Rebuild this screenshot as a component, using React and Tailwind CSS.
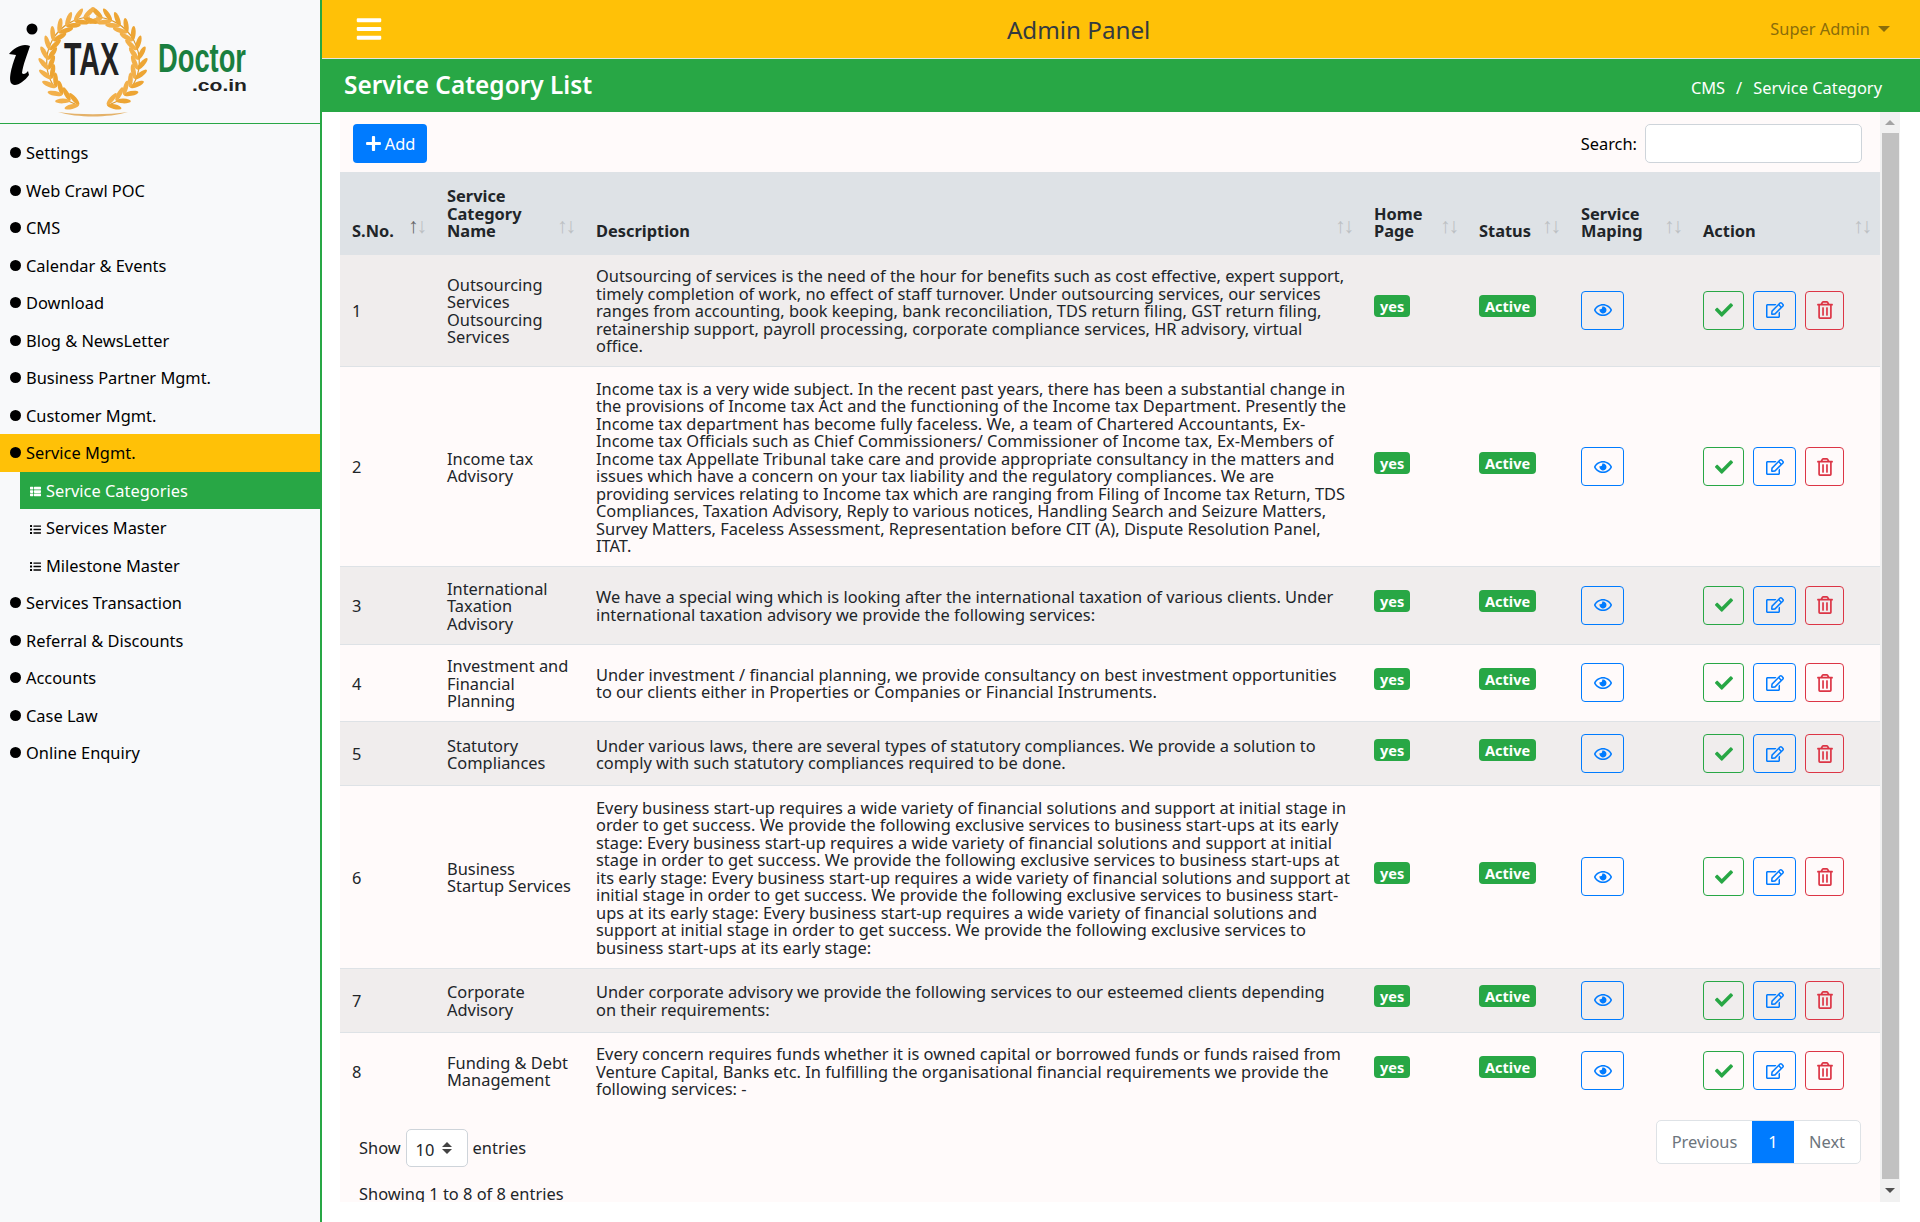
import { FaBars, FaCheck, FaList, FaPlus, FaRegEdit, FaRegEye, FaRegTrashAlt, FaThList } from "react-icons/fa";

const menu = [
  { label: "Settings" },
  { label: "Web Crawl POC" },
  { label: "CMS" },
  { label: "Calendar & Events" },
  { label: "Download" },
  { label: "Blog & NewsLetter" },
  { label: "Business Partner Mgmt." },
  { label: "Customer Mgmt." },
  { label: "Service Mgmt.", active: true },
  { label: "Service Categories", sub: true, current: true },
  { label: "Services Master", sub: true },
  { label: "Milestone Master", sub: true },
  { label: "Services Transaction" },
  { label: "Referral & Discounts" },
  { label: "Accounts" },
  { label: "Case Law" },
  { label: "Online Enquiry" },
];

const heads = [
  { lines: ["S.No."], width: "w-[95px]", sorted: true },
  { lines: ["Service", "Category", "Name"], width: "w-[149px]" },
  { lines: ["Description"], width: "w-[778px]" },
  { lines: ["Home", "Page"], width: "w-[105px]" },
  { lines: ["Status"], width: "w-[102px]" },
  { lines: ["Service", "Maping"], width: "w-[122px]" },
  { lines: ["Action"], width: "w-[189px]" },
];

const rows = [
  {
    id: 1,
    name: ["Outsourcing", "Services", "Outsourcing", "Services"],
    desc: [
      "Outsourcing of services is the need of the hour for benefits such as cost effective, expert support,",
      "timely completion of work, no effect of staff turnover. Under outsourcing services, our services",
      "ranges from accounting, book keeping, bank reconciliation, TDS return filing, GST return filing,",
      "retainership support, payroll processing, corporate compliance services, HR advisory, virtual",
      "office.",
    ],
  },
  {
    id: 2,
    name: ["Income tax", "Advisory"],
    desc: [
      "Income tax is a very wide subject. In the recent past years, there has been a substantial change in",
      "the provisions of Income tax Act and the functioning of the Income tax Department. Presently the",
      "Income tax department has become fully faceless. We, a team of Chartered Accountants, Ex-",
      "Income tax Officials such as Chief Commissioners/ Commissioner of Income tax, Ex-Members of",
      "Income tax Appellate Tribunal take care and provide appropriate consultancy in the matters and",
      "issues which have a concern on your tax liability and the regulatory compliances. We are",
      "providing services relating to Income tax which are ranging from Filing of Income tax Return, TDS",
      "Compliances, Taxation Advisory, Reply to various notices, Handling Search and Seizure Matters,",
      "Survey Matters, Faceless Assessment, Representation before CIT (A), Dispute Resolution Panel,",
      "ITAT.",
    ],
  },
  {
    id: 3,
    name: ["International", "Taxation", "Advisory"],
    desc: [
      "We have a special wing which is looking after the international taxation of various clients. Under",
      "international taxation advisory we provide the following services:",
    ],
  },
  {
    id: 4,
    name: ["Investment and", "Financial", "Planning"],
    desc: [
      "Under investment / financial planning, we provide consultancy on best investment opportunities",
      "to our clients either in Properties or Companies or Financial Instruments.",
    ],
  },
  {
    id: 5,
    name: ["Statutory", "Compliances"],
    desc: [
      "Under various laws, there are several types of statutory compliances. We provide a solution to",
      "comply with such statutory compliances required to be done.",
    ],
  },
  {
    id: 6,
    name: ["Business", "Startup Services"],
    desc: [
      "Every business start-up requires a wide variety of financial solutions and support at initial stage in",
      "order to get success. We provide the following exclusive services to business start-ups at its early",
      "stage: Every business start-up requires a wide variety of financial solutions and support at initial",
      "stage in order to get success. We provide the following exclusive services to business start-ups at",
      "its early stage: Every business start-up requires a wide variety of financial solutions and support at",
      "initial stage in order to get success. We provide the following exclusive services to business start-",
      "ups at its early stage: Every business start-up requires a wide variety of financial solutions and",
      "support at initial stage in order to get success. We provide the following exclusive services to",
      "business start-ups at its early stage:",
    ],
  },
  {
    id: 7,
    name: ["Corporate", "Advisory"],
    desc: [
      "Under corporate advisory we provide the following services to our esteemed clients depending",
      "on their requirements:",
    ],
  },
  {
    id: 8,
    name: ["Funding & Debt", "Management"],
    desc: [
      "Every concern requires funds whether it is owned capital or borrowed funds or funds raised from",
      "Venture Capital, Banks etc. In fulfilling the organisational financial requirements we provide the",
      "following services: -",
    ],
  },
];

// leaf positions for one wreath branch, side is 1 (right) or -1 (left)
function leaves(side) {
  const items = [];
  for (let i = 0; i < 13; i++) {
    const t = ((18 + i * 12.5) * Math.PI) / 180;
    const x = 93 + side * 45 * Math.sin(t);
    const y = 62 + 45 * Math.cos(t);
    const deg = (Math.atan2(-Math.sin(t), side * Math.cos(t)) * 180) / Math.PI;
    items.push({ x, y, deg, key: i });
  }
  return items;
}

function Logo() {
  return (
    <svg width="320" height="123" viewBox="0 0 320 123" className="block">
      <circle cx="32" cy="29" r="5.5" fill="#000" />
      <path d="M9 54 C15 47 23 43 30 46 C27 55 23 65 22 73 C23 75 26 74 28 71 L29 75 C24 82 16 87 12 84 C8 81 11 68 16 55 Z" fill="#000" />
      <path d="M53 85 A45 45 0 0 1 90 17 M133 85 A45 45 0 0 0 96 17 M66 100 L75 104 M120 100 L111 104" fill="none" stroke="#dd9a2e" strokeWidth="1.2" />
      {[1, -1].map((side) =>
        leaves(side).map((l) => (
          <g key={`${side}-${l.key}`} transform={`translate(${l.x} ${l.y})`}>
            <ellipse cx="7.5" cy="0" rx="7.5" ry="2.4" fill="#eda534" transform={`rotate(${l.deg + 32})`} />
            <ellipse cx="7.5" cy="0" rx="7.5" ry="2.4" fill="#f2b04a" transform={`rotate(${l.deg - 32})`} />
          </g>
        )),
      )}
      <path d="M58 112 C78 118 108 118 128 112 C108 115 78 115 58 112 Z" fill="#e4b26a" />
      <text x="64" y="75" textLength="55" lengthAdjust="spacingAndGlyphs" fontSize="47" fontWeight="700" fontFamily="Liberation Sans, sans-serif" fill="#222">TAX</text>
      <text x="158" y="72" textLength="88" lengthAdjust="spacingAndGlyphs" fontSize="41" fontWeight="700" fontFamily="Liberation Sans, sans-serif" fill="#1a7f3f">Doctor</text>
      <text x="192" y="91" textLength="55" lengthAdjust="spacingAndGlyphs" fontSize="17" fontWeight="700" fontFamily="Liberation Sans, sans-serif" fill="#222">.co.in</text>
    </svg>
  );
}

function Sidebar() {
  return (
    <aside className="w-[322px] shrink-0 border-r-2 border-[#28a745] bg-[#f8f9fa]">
      <div className="h-[124px] border-b border-[#28a745]">
        <Logo />
      </div>
      <ul className="pt-[10px]">
        {menu.map((m) =>
          m.sub ? (
            <li key={m.label} className={`ml-[20px] flex h-[37.5px] items-center gap-[5px] pl-[10px] ${m.current ? "bg-[#28a745] text-white" : "text-black"}`}>
              {m.current ? <FaThList size={11} className="mt-[3px]" /> : <FaList size={11} className="mt-[3px]" />}
              <span>{m.label}</span>
            </li>
          ) : (
            <li key={m.label} className={`flex h-[37.5px] items-center gap-[5px] pl-[10px] text-black ${m.active ? "bg-[#ffc107]" : ""}`}>
              <span className="h-[11px] w-[11px] rounded-full bg-black" />
              <span>{m.label}</span>
            </li>
          ),
        )}
      </ul>
    </aside>
  );
}

function SortArrows({ sorted }) {
  return (
    <span className="absolute right-[10px] bottom-[18px] text-[21px] leading-none font-normal tracking-[-2px] text-[#bcc0c3]">
      <span className={sorted ? "text-[#666]" : ""}>↑</span>↓
    </span>
  );
}

function Badge({ children }) {
  return (
    <span className="mb-[8px] inline-block rounded-[4px] bg-[#28a745] px-[6px] py-[3px] align-middle text-[14.5px] leading-[16px] font-bold text-white">
      {children}
    </span>
  );
}

function IconButton({ className, children }) {
  return (
    <button className={`flex h-[39px] items-center justify-center rounded-[4px] border text-[18px] ${className}`}>
      {children}
    </button>
  );
}

function Table() {
  return (
    <table className="w-[1540px] table-fixed border-collapse text-[#212529]">
      <thead>
        <tr className="h-[82px] bg-[#dee2e6]">
          {heads.map((h) => (
            <th key={h.lines[0] + h.lines.length} className={`relative px-[12px] pb-[14px] text-left align-bottom font-bold ${h.width}`}>
              {h.lines.map((l) => (
                <div key={l}>{l}</div>
              ))}
              <SortArrows sorted={h.sorted} />
            </th>
          ))}
        </tr>
      </thead>
      <tbody>
        {rows.map((r) => (
          <tr key={r.id} className={`border-t border-[#dee2e6] ${r.id % 2 ? "bg-[#f0eded]" : "bg-[#fffafa]"}`}>
            <td className="px-[12px] pt-[12.5px] pb-[11.5px] align-middle">{r.id}</td>
            <td className="px-[12px] pt-[12.5px] pb-[11.5px] align-middle whitespace-nowrap">
              {r.name.map((l, i) => (
                <div key={i}>{l}</div>
              ))}
            </td>
            <td className="px-[12px] pt-[12.5px] pb-[11.5px] align-middle whitespace-nowrap">
              {r.desc.map((l, i) => (
                <div key={i}>{l}</div>
              ))}
            </td>
            <td className="px-[12px] py-[12px] align-middle">
              <Badge>yes</Badge>
            </td>
            <td className="px-[12px] py-[12px] align-middle">
              <Badge>Active</Badge>
            </td>
            <td className="px-[12px] py-[12px] align-middle">
              <IconButton className="w-[43px] border-[#007bff] text-[#007bff]">
                <FaRegEye />
              </IconButton>
            </td>
            <td className="px-[12px] py-[12px] align-middle">
              <div className="flex gap-[9px]">
                <IconButton className="w-[41px] border-[#28a745] text-[#28a745]">
                  <FaCheck />
                </IconButton>
                <IconButton className="w-[43px] border-[#007bff] text-[#007bff]">
                  <FaRegEdit />
                </IconButton>
                <IconButton className="w-[39px] border-[#dc3545] text-[#dc3545]">
                  <FaRegTrashAlt />
                </IconButton>
              </div>
            </td>
          </tr>
        ))}
      </tbody>
    </table>
  );
}

function Scrollbar() {
  return (
    <div className="flex h-full w-[20px] shrink-0 flex-col items-center bg-[#f1f1f1]">
      <div className="flex h-[21px] w-full items-center justify-center">
        <span className="border-x-[5px] border-b-[5px] border-x-transparent border-b-[#a3a3a3]" />
      </div>
      <div className="ml-[1px] w-[17px] flex-1 bg-[#c1c1c1]" />
      <div className="flex h-[23px] w-full items-center justify-center">
        <span className="border-x-[5px] border-t-[5px] border-x-transparent border-t-[#505050]" />
      </div>
    </div>
  );
}

export default function App() {
  return (
    <div className="flex h-[1222px] w-[1920px] overflow-hidden bg-white font-['Noto_Sans',sans-serif] text-[16.4px] leading-[17.5px]">
      <Sidebar />
      <main className="flex min-w-0 flex-1 flex-col">
        <header className="flex h-[59px] shrink-0 items-center justify-between border-b border-[#e4e4e4] bg-[#ffc107] pr-[30px] pl-[33px]">
          <FaBars size={28} className="text-white" />
          <h1 className="mt-[2px] ml-[4px] text-[24.2px] leading-none text-[#343a40]">Admin Panel</h1>
          <div className="flex items-center gap-[8px] text-[#8a6d0a]">
            Super Admin
            <span className="border-x-[6px] border-t-[6px] border-x-transparent border-t-[#8a6d0a]" />
          </div>
        </header>
        <div className="flex h-[53px] shrink-0 items-center justify-between bg-[#28a745] pr-[38px] pl-[22px] text-white">
          <h2 className="mb-[1px] text-[24.4px] font-semibold">Service Category List</h2>
          <div className="mt-[4px] flex gap-[11px]">
            <span>CMS</span>
            <span>/</span>
            <span>Service Category</span>
          </div>
        </div>
        <div className="flex h-[1090px] pr-[20px] pl-[18px]">
          <section className="min-w-0 flex-1 overflow-hidden bg-[#fffafa]">
            <div className="flex h-[60px] items-start justify-between pt-[12px] pr-[18px] pl-[13px]">
              <button className="flex h-[39px] w-[74px] items-center justify-center gap-[3px] rounded-[4px] bg-[#007bff] text-white">
                <FaPlus size={17} />
                Add
              </button>
              <label className="flex items-center gap-[8px]">
                Search:
                <input className="h-[39px] w-[217px] rounded-[5px] border border-[#ced4da] bg-white" />
              </label>
            </div>
            <Table />
            <div className="flex items-start justify-between pr-[19px] pl-[19px] text-[#212529]">
              <div>
                <div className="mt-[20px] flex items-center gap-[5px]">
                  Show
                  <span className="flex h-[38px] w-[62px] items-center gap-[8px] rounded-[5px] border border-[#ced4da] bg-white pl-[9px]">
                    <span className="mt-[4px]">10</span>
                    <span className="flex flex-col gap-[2px]">
                      <span className="border-x-[5px] border-b-[5px] border-x-transparent border-b-[#444]" />
                      <span className="border-x-[5px] border-t-[5px] border-x-transparent border-t-[#444]" />
                    </span>
                  </span>
                  entries
                </div>
                <div className="mt-[18px]">Showing 1 to 8 of 8 entries</div>
              </div>
              <div className="mt-[11px] flex h-[44px] items-stretch overflow-hidden rounded-[5px] border border-[#dee2e6] bg-white text-[#6c757d]">
                <span className="flex w-[95px] items-center justify-center">Previous</span>
                <span className="flex w-[42px] items-center justify-center bg-[#007bff] text-white">1</span>
                <span className="flex w-[66px] items-center justify-center">Next</span>
              </div>
            </div>
          </section>
          <Scrollbar />
        </div>
      </main>
    </div>
  );
}
